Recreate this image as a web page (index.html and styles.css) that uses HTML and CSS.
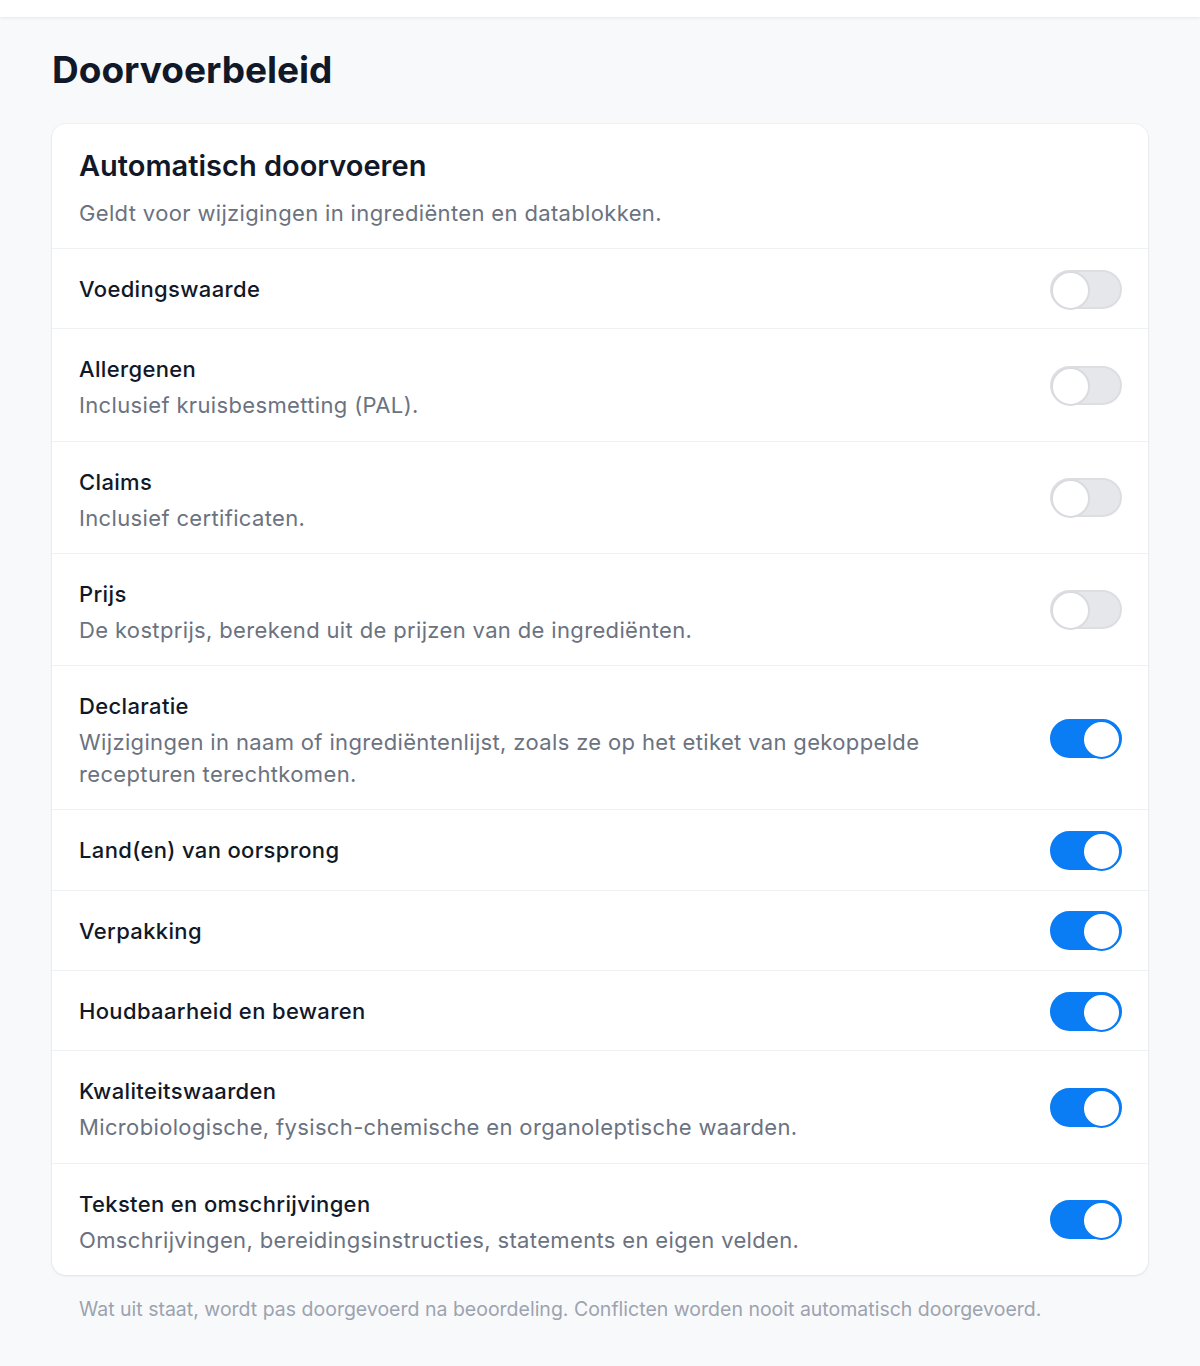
FILE: index.html
```html
<!DOCTYPE html>
<html lang="nl">
<head>
  <meta charset="UTF-8" />
  <meta name="viewport" content="width=device-width, initial-scale=1.0"/>
  <title>Doorvoerbeleid</title>
  <link rel="stylesheet" href="styles.css">
</head>
<body>

  <div class="topbar"></div>

  <main class="page">
    <h1>Doorvoerbeleid</h1>

    <section class="card">
      <div class="card-head">
        <h2>Automatisch doorvoeren</h2>
        <p>Geldt voor wijzigingen in ingrediënten en datablokken.</p>
      </div>

      <div class="row">
        <div class="text">
          <div class="label">Voedingswaarde</div>
        </div>
        <span class="switch" role="switch" aria-checked="false"></span>
      </div>

      <div class="row">
        <div class="text">
          <div class="label">Allergenen</div>
          <div class="desc">Inclusief kruisbesmetting (PAL).</div>
        </div>
        <span class="switch" role="switch" aria-checked="false"></span>
      </div>

      <div class="row">
        <div class="text">
          <div class="label">Claims</div>
          <div class="desc">Inclusief certificaten.</div>
        </div>
        <span class="switch" role="switch" aria-checked="false"></span>
      </div>

      <div class="row">
        <div class="text">
          <div class="label">Prijs</div>
          <div class="desc">De kostprijs, berekend uit de prijzen van de ingrediënten.</div>
        </div>
        <span class="switch" role="switch" aria-checked="false"></span>
      </div>

      <div class="row">
        <div class="text">
          <div class="label">Declaratie</div>
          <div class="desc">Wijzigingen in naam of ingrediëntenlijst, zoals ze op het etiket van gekoppelde recepturen terechtkomen.</div>
        </div>
        <span class="switch on" role="switch" aria-checked="true"></span>
      </div>

      <div class="row">
        <div class="text">
          <div class="label">Land(en) van oorsprong</div>
        </div>
        <span class="switch on" role="switch" aria-checked="true"></span>
      </div>

      <div class="row">
        <div class="text">
          <div class="label">Verpakking</div>
        </div>
        <span class="switch on" role="switch" aria-checked="true"></span>
      </div>

      <div class="row">
        <div class="text">
          <div class="label">Houdbaarheid en bewaren</div>
        </div>
        <span class="switch on" role="switch" aria-checked="true"></span>
      </div>

      <div class="row">
        <div class="text">
          <div class="label">Kwaliteitswaarden</div>
          <div class="desc">Microbiologische, fysisch-chemische en organoleptische waarden.</div>
        </div>
        <span class="switch on" role="switch" aria-checked="true"></span>
      </div>

      <div class="row">
        <div class="text">
          <div class="label">Teksten en omschrijvingen</div>
          <div class="desc">Omschrijvingen, bereidingsinstructies, statements en eigen velden.</div>
        </div>
        <span class="switch on" role="switch" aria-checked="true"></span>
      </div>
    </section>

    <p class="note">Wat uit staat, wordt pas doorgevoerd na beoordeling. Conflicten worden nooit automatisch doorgevoerd.</p>
  </main>

</body>
</html>
```

FILE: styles.css
```css
* {
  box-sizing: border-box;
}

body {
  margin: 0;
  background: #f8f9fb;
  font-family: Inter, 'Noto Sans', sans-serif;
  color: #111827;
}

.topbar {
  height: 17px;
  background: #fff;
  box-shadow: 0 1px 3px rgba(0, 0, 0, 0.08);
}

.page {
  padding: 31px 52px 40px;
}

h1 {
  margin: 0;
  font-size: 37px;
  line-height: 44px;
  font-weight: 700;
  color: #111827;
}

.card {
  margin-top: 32px;
  background: #fff;
  border-radius: 14px;
  box-shadow: 0 1px 3px rgba(16, 24, 40, 0.08), 0 0 0 1px rgba(16, 24, 40, 0.03);
}

.card-head {
  padding: 24px 27px 19px;
  border-bottom: 1px solid #eef0f3;
}

.card-head h2 {
  margin: 0;
  font-size: 29px;
  line-height: 36px;
  font-weight: 600;
  color: #111827;
}

.card-head p {
  margin: 13px 0 0;
  font-size: 22px;
  line-height: 32px;
  letter-spacing: 0.35px;
  color: #6b7280;
}

.row {
  display: flex;
  align-items: center;
  gap: 24px;
  padding: 20px 27px 19.3px;
  border-bottom: 1px solid #eef0f3;
}

.row:last-child {
  border-bottom: none;
}

.text {
  flex: 1;
  min-width: 0;
  padding: 4px 90px 4px 0;
}

.label {
  font-size: 22px;
  line-height: 32px;
  font-weight: 500;
  letter-spacing: 0.35px;
  color: #111827;
}

.desc {
  margin: 4px 0 -4px;
  font-size: 22px;
  line-height: 32px;
  letter-spacing: 0.35px;
  color: #6b7280;
}

.switch {
  position: relative;
  flex-shrink: 0;
  width: 72px;
  height: 39px;
  margin-right: -1px;
  border-radius: 20px;
  background: #e5e7eb;
  border: 2px solid #dcdee2;
}

.switch::after {
  content: '';
  position: absolute;
  top: -1px;
  left: -1px;
  width: 35px;
  height: 35px;
  border-radius: 50%;
  background: #fff;
  border: 2px solid #d9dbe0;
}

.switch.on {
  background: #0a7cf4;
  border-color: #0a7cf4;
}

.switch.on::after {
  left: auto;
  right: -1px;
  border-color: #0a7cf4;
}

.note {
  margin: 20px 0 0;
  padding: 0 27px;
  font-size: 19.5px;
  line-height: 28px;
  color: #9ca3af;
}
```
